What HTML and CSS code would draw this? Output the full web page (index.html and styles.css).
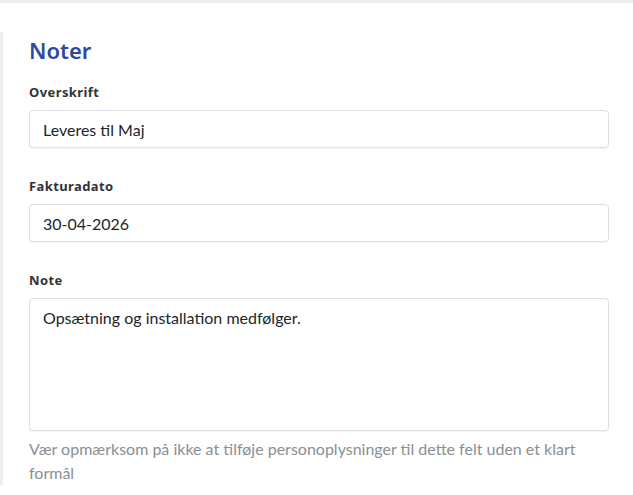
FILE: index.html
```html
<!DOCTYPE html>
<html lang="da">
<head>
    <meta charset="UTF-8">
    <meta name="viewport" content="width=device-width, initial-scale=1.0">
    <title>Noter</title>
    <link rel="stylesheet" href="styles.css">
</head>
<body>
    <div class="topbar"></div>
    <div class="panel">
        <h2>Noter</h2>

        <div class="form-group">
            <label for="overskrift">Overskrift</label>
            <input type="text" id="overskrift" value="Leveres til Maj">
        </div>

        <div class="form-group">
            <label for="fakturadato">Fakturadato</label>
            <input type="text" id="fakturadato" value="30-04-2026">
        </div>

        <div class="form-group last">
            <label for="note">Note</label>
            <textarea id="note">Opsætning og installation medfølger.</textarea>
            <p class="help">Vær opmærksom på ikke at tilføje personoplysninger til dette felt uden et klart formål</p>
        </div>
    </div>
</body>
</html>
```

FILE: styles.css
```css
body {
    margin: 0;
    font-family: "Noto Sans", Arial, sans-serif;
    background-color: white;
    color: #212529;
}
.topbar {
    height: 3px;
    background-color: #eceef2;
}
.panel {
    margin-top: 29px;
    margin-right: 24px;
    border-left: 3px solid #eceef2;
    padding-left: 26px;
}
h2 {
    margin: 0 0 14px 0;
    font-size: 22px;
    font-weight: 600;
    line-height: 36px;
    color: #2d4a9c;
}
.form-group {
    margin-bottom: 28px;
}
label {
    display: block;
    margin-bottom: 8px;
    font-size: 13px;
    font-weight: 700;
    line-height: 20px;
    letter-spacing: 0.4px;
    color: #333;
}
input,
textarea {
    display: block;
    box-sizing: border-box;
    width: 100%;
    margin: 0;
    padding: 6px 13px;
    border: 1px solid #dcdfe6;
    border-radius: 4px;
    box-shadow: 0 1px 2px rgba(0,0,0,0.06);
    font-family: Lato, "Noto Sans", sans-serif;
    font-size: 16px;
    line-height: 24px;
    color: #212529;
    background: white;
}
input {
    height: 38px;
}
textarea {
    height: 133px;
    padding-top: 7px;
    resize: none;
}
.help {
    margin: 6px 0 0 0;
    font-family: Lato, "Noto Sans", sans-serif;
    font-size: 16px;
    line-height: 24px;
    color: #8a8f94;
}
```
